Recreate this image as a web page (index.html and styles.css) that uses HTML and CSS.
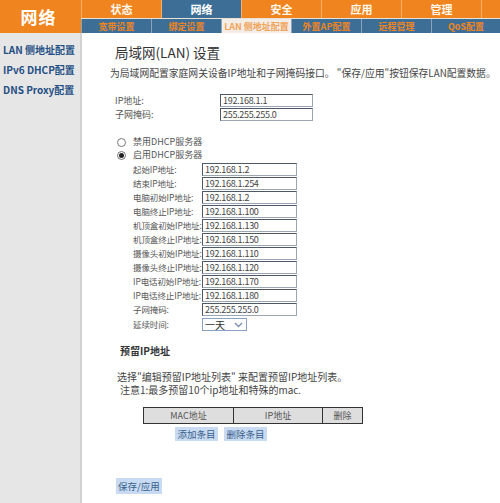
FILE: index.html
```html
<!DOCTYPE html>
<html lang="zh-CN">
<head>
<meta charset="utf-8">
<title>LAN 侧地址配置</title>
<link rel="stylesheet" href="styles.css">
</head>
<body>
<div class="page">
  <header class="header">
    <div class="logo">网络</div>
    <div class="tabs">
      <nav class="main-tabs">
        <span class="mtab">状态</span>
        <span class="mtab active">网络</span>
        <span class="mtab">安全</span>
        <span class="mtab">应用</span>
        <span class="mtab">管理</span>
        <span class="mtab rest"></span>
      </nav>
      <nav class="sub-tabs">
        <span class="stab">宽带设置</span>
        <span class="stab">绑定设置</span>
        <span class="stab active">LAN 侧地址配置</span>
        <span class="stab">外置AP配置</span>
        <span class="stab">远程管理</span>
        <span class="stab">QoS配置</span>
      </nav>
    </div>
  </header>
  <div class="body">
    <aside class="sidebar">
      <a class="side-item">LAN 侧地址配置</a>
      <a class="side-item">IPv6 DHCP配置</a>
      <a class="side-item">DNS Proxy配置</a>
    </aside>
    <main class="content">
      <h1 class="title">局域网(LAN) 设置</h1>
      <p class="desc">为局域网配置家庭网关设备IP地址和子网掩码接口。 "保存/应用"按钮保存LAN配置数据。</p>
      <div class="lan-form">
        <label class="lbl">IP地址:</label><input class="inp wide" value="192.168.1.1">
        <label class="lbl">子网掩码:</label><input class="inp wide" value="255.255.255.0">
      </div>
      <div class="radios">
        <label class="radio"><span class="dot"></span>禁用DHCP服务器</label>
        <label class="radio"><span class="dot on"></span>启用DHCP服务器</label>
      </div>
      <div class="dhcp-form">
        <label class="lbl">起始IP地址:</label><input class="inp" value="192.168.1.2">
        <label class="lbl">结束IP地址:</label><input class="inp" value="192.168.1.254">
        <label class="lbl">电脑初始IP地址:</label><input class="inp" value="192.168.1.2">
        <label class="lbl">电脑终止IP地址:</label><input class="inp" value="192.168.1.100">
        <label class="lbl">机顶盒初始IP地址:</label><input class="inp" value="192.168.1.130">
        <label class="lbl">机顶盒终止IP地址:</label><input class="inp" value="192.168.1.150">
        <label class="lbl">摄像头初始IP地址:</label><input class="inp" value="192.168.1.110">
        <label class="lbl">摄像头终止IP地址:</label><input class="inp" value="192.168.1.120">
        <label class="lbl">IP电话初始IP地址:</label><input class="inp" value="192.168.1.170">
        <label class="lbl">IP电话终止IP地址:</label><input class="inp" value="192.168.1.180">
        <label class="lbl">子网掩码:</label><input class="inp" value="255.255.255.0">
        <label class="lbl">延续时间:</label>
        <div class="select"><span>一天</span><svg class="arrow" width="9" height="6" viewBox="0 0 9 6"><path d="M1 1 L4.5 4.5 L8 1" fill="none" stroke="#7a8fb0" stroke-width="1.4"/></svg></div>
      </div>
      <h2 class="subtitle">预留IP地址</h2>
      <p class="note1">选择"编辑预留IP地址列表" 来配置预留IP地址列表。</p>
      <p class="note2">注意1:最多预留10个ip地址和特殊的mac.</p>
      <table class="tbl">
        <tr><th class="c1">MAC地址</th><th class="c2">IP地址</th><th class="c3">删除</th></tr>
      </table>
      <div class="btns">
        <button class="btn">添加条目</button>
        <button class="btn">删除条目</button>
      </div>
      <button class="btn save">保存/应用</button>
    </main>
  </div>
</div>
</body>
</html>
```

FILE: styles.css
```css
* { box-sizing: border-box; }
html, body { margin: 0; padding: 0; background: #fff; }
body {
  font-family: "Noto Sans CJK SC", "Liberation Sans", sans-serif;
  font-size: 10px;
  color: #444;
  width: 500px;
  height: 503px;
  overflow: hidden;
}
.page { display: flex; flex-direction: column; height: 503px; }

.header { display: flex; height: 33px; background: #f0851f; }
.logo {
  width: 81px;
  background: #f0851f;
  color: #fff;
  font-size: 17px;
  font-weight: bold;
  display: flex; align-items: center; justify-content: center;
  letter-spacing: 1px;
  padding-right: 4px;
}
.tabs { flex: 1; display: flex; flex-direction: column; }
.main-tabs {
  display: flex; height: 19px; gap: 1px;
  background: #f6b06a;
  padding-left: 1px;
  border-bottom: 1px solid #e9e1d6;
}
.mtab {
  width: 79px; background: #f0851f; color: #fff8ec;
  font-weight: bold; font-size: 11px;
  display: flex; align-items: center; justify-content: center;
}
.mtab.active { background: #3d6f96; color: #fff; }
.mtab.rest { flex: 1; width: auto; }
.sub-tabs {
  display: flex; height: 13px; gap: 1px;
  background: #8aa4bb;
  padding-left: 1px;
  flex: 1;
}
.stab {
  flex: 0 0 69px; background: #3d6f96; color: #f0851f;
  font-size: 9px; font-weight: bold;
  display: flex; align-items: center; justify-content: center;
  white-space: nowrap; overflow: hidden;
}
.stab:last-child { flex: 1; }
.stab.active { background: #f3ede6; color: #f0a45a; }

.body { flex: 1; display: flex; }
.sidebar {
  width: 82px;
  background: #e6e6e6;
  border-right: 2px solid #d2d2d2;
  display: flex; flex-direction: column;
  padding-top: 9px;
  gap: 5px;
}
.side-item {
  color: #1f4f84; font-weight: bold; font-size: 10px;
  line-height: 15px; padding-left: 3px; white-space: nowrap;
}
.content { flex: 1; padding-left: 28px; position: relative; }
.title { font-size: 13.5px; font-weight: normal; color: #333; margin: 11px 0 0 5px; line-height: 17px; }
.desc { margin: 5px 0 0 0; line-height: 14px; color: #444; white-space: nowrap; font-size: 9.8px; }
.lan-form {
  display: grid; grid-template-columns: 105px 93px; row-gap: 1px;
  margin: 14px 0 0 5px; align-items: center;
}
.lbl { line-height: 13px; color: #555; white-space: nowrap; font-size: 9px; }
.inp {
  height: 13px; width: 93px;
  border: 1px solid #4d5966; border-right-color: #9aa6b2; border-bottom-color: #9aa6b2;
  padding: 0 2px; font: 9px "Noto Sans CJK SC", "Liberation Sans", sans-serif;
  letter-spacing: -0.3px;
  color: #444; background: #fff; outline: none;
}
.radios { display: flex; flex-direction: column; margin: 15px 0 0 7px; gap: 1px; }
.radio { display: flex; align-items: center; line-height: 12px; color: #555; font-size: 9px; }
.dot {
  width: 9px; height: 9px; border: 1px solid #777; border-radius: 50%;
  margin-right: 7px; background: #fff; display: inline-flex; align-items: center; justify-content: center;
}
.dot.on::after { content: ""; width: 5px; height: 5px; border-radius: 50%; background: #222; }
.dhcp-form {
  display: grid; grid-template-columns: 69px 95px; row-gap: 1px;
  margin: 2px 0 0 23px; align-items: center;
}
.dhcp-form .lbl { font-size: 8.5px; letter-spacing: -0.1px; }
.dhcp-form .inp { width: 95px; }
.select {
  width: 45px; height: 13px; border: 1px solid #8aa0c0;
  display: flex; align-items: center; justify-content: space-between;
  padding: 0 3px 0 2px; color: #333; font-size: 10px; margin-top: 1px;
}
.subtitle { font-size: 10px; font-weight: bold; color: #333; margin: 13px 0 0 10px; line-height: 14px; }
.note1 { margin: 12px 0 0 7px; line-height: 13px; white-space: nowrap; }
.note2 { margin: 0 0 0 10px; line-height: 13px; white-space: nowrap; }
.tbl {
  border-collapse: collapse; margin: 11px 0 0 33px;
  font-size: 9px;
}
.tbl th {
  background: #dedede; border: 1px solid #333; font-weight: normal; color: #555;
  height: 16px; padding: 0;
}
.tbl .c1 { width: 90px; }
.tbl .c2 { width: 89px; }
.tbl .c3 { width: 40px; }
.btns { display: flex; gap: 6px; margin: 3px 0 0 65px; }
.btn {
  background: #c8dbf2; border: none; color: #3a5f8a;
  font: 9.5px "Noto Sans CJK SC", "Liberation Sans", sans-serif;
  height: 14px; padding: 0 2.5px; line-height: 14px;
}
.save { display: block; margin: 37px 0 0 6px; height: 16px; padding: 0 2px; }
```
